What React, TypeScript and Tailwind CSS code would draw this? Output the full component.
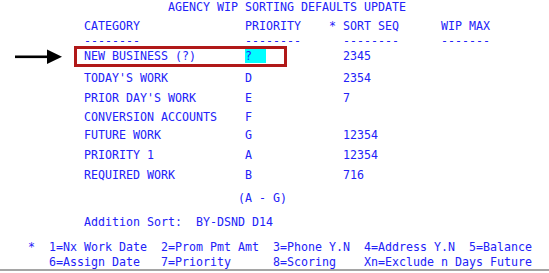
import React from "react";

function pad(parts: [number, string][]): string {
  let s = "";
  for (const [col, text] of parts) {
    while (s.length < col) s += " ";
    s += text;
  }
  return s;
}

const rows: { name: string; pri: string; seq: string; mt: string }[] = [
  { name: "TODAY'S WORK", pri: "D", seq: "2354", mt: "mt-[8px]" },
  { name: "PRIOR DAY'S WORK", pri: "E", seq: "7", mt: "mt-[6px]" },
  { name: "CONVERSION ACCOUNTS", pri: "F", seq: "", mt: "mt-[5px]" },
  { name: "FUTURE WORK", pri: "G", seq: "12354", mt: "mt-[4px]" },
  { name: "PRIORITY 1", pri: "A", seq: "12354", mt: "mt-[6px]" },
  { name: "REQUIRED WORK", pri: "B", seq: "716", mt: "mt-[6px]" },
];

export default function App() {
  const line = "h-[14px] leading-[14px] whitespace-pre";
  return (
    <div className="w-[549px] h-[273px] bg-white overflow-hidden flex flex-col text-[#2222f8] text-[11.63px] [font-family:'DejaVu_Sans_Mono',monospace]">
      <div className="pl-[28px] flex flex-col">
        <div className={line}>{pad([[20, "AGENCY WIP SORTING DEFAULTS UPDATE"]])}</div>
        <div className={`${line} mt-[5px]`}>
          {pad([
            [8, "CATEGORY"],
            [31, "PRIORITY"],
            [43, "*"],
            [45, "SORT SEQ"],
            [59, "WIP MAX"],
          ])}
        </div>
        <div className={`${line} mt-[1px]`}>
          {pad([
            [8, "--------"],
            [31, "--------"],
            [45, "--------"],
            [59, "-------"],
          ])}
        </div>
        <div className={`${line} mt-[1px] relative`}>
          <span>{pad([[8, "NEW BUSINESS (?)"], [31, ""]])}</span>
          <span className="inline-block h-[14px] w-[21px] bg-[#00ffff]">?</span>
          <span>{"           2345"}</span>
          <div className="absolute left-[46px] top-[-3px] w-[213px] h-[21px] border-[3px] border-[#b01818]" />
          <svg className="absolute left-[-14px] top-[0px]" width="50" height="16" viewBox="0 0 50 16">
            <rect x="1" y="6.5" width="34" height="2.6" fill="#000" />
            <polygon points="33,0.5 48,7.8 33,15" fill="#000" />
          </svg>
        </div>
        {rows.map((r) => (
          <div key={r.name} className={`${line} ${r.mt}`}>
            {pad([
              [8, r.name],
              [31, r.pri],
              [45, r.seq],
            ])}
          </div>
        ))}
        <div className={`${line} mt-[9px]`}>{pad([[30, "(A - G)"]])}</div>
        <div className={`${line} mt-[10px]`}>{pad([[8, "Addition Sort:  BY-DSND D14"]])}</div>
        <div className={`${line} mt-[11px]`}>
          {"*  1=Nx Work Date  2=Prom Pmt Amt  3=Phone Y.N  4=Address Y.N  5=Balance"}
        </div>
        <div className={`${line} mt-[1px]`}>
          {pad([
            [3, "6=Assign Date"],
            [19, "7=Priority"],
            [35, "8=Scoring"],
            [48, "Xn=Exclude n Days Future"],
          ])}
        </div>
      </div>
      <div className="h-[2px] bg-[#a5a5a5] mt-[0px]" />
    </div>
  );
}
